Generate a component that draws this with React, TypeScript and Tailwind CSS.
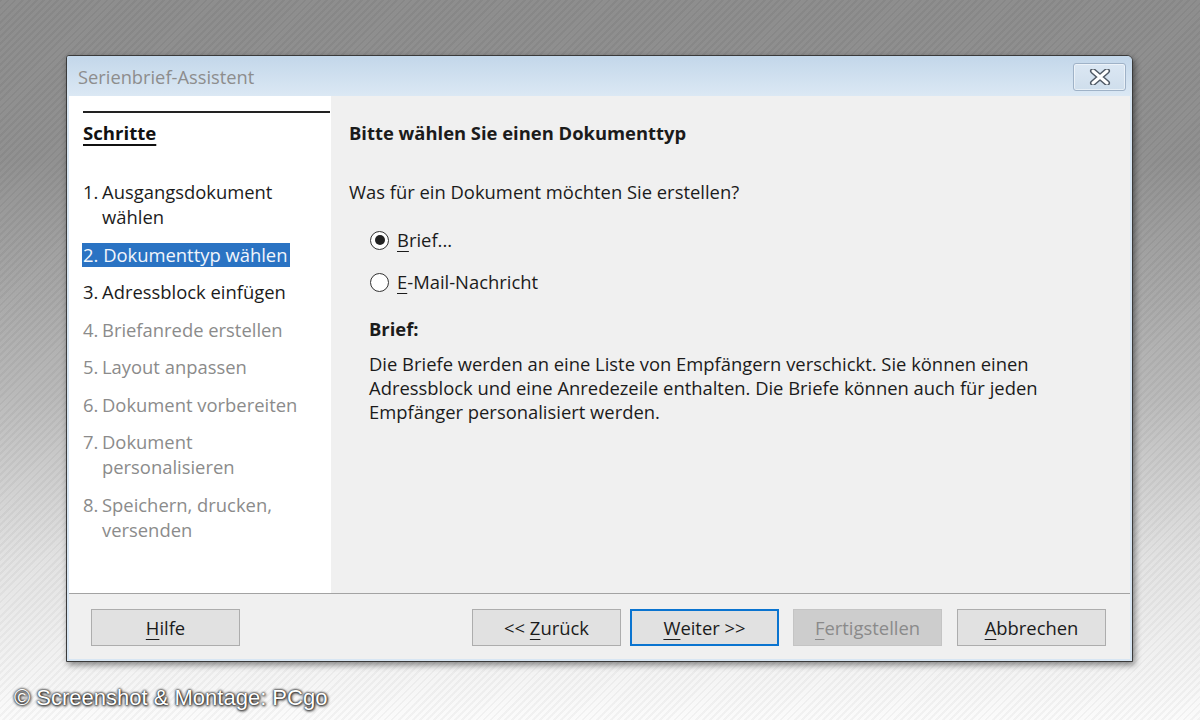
import React from "react";

const font = { fontFamily: '"Open Sans", "Noto Sans", sans-serif' };

function Step({ n, lines, state }: { n: string; lines: string[]; state: "done" | "active" | "todo" | "off" }) {
  const color =
    state === "off" ? "text-[#8b8b8b]" : state === "active" ? "text-[#f2f6fc]" : "text-[#1b1b1b]";
  if (state === "active") {
    return (
      <div className="leading-[25px]">
        <span className="inline-block bg-[#2a73c3] text-[#f2f6fc] h-[24px] leading-[24px] pr-[3px] -ml-[1px] pl-[1px]">
          {n} {lines[0]}
        </span>
      </div>
    );
  }
  return (
    <div className={`flex leading-[25px] ${color}`}>
      <span className="w-[19px] shrink-0">{n}</span>
      <div className="flex flex-col">
        {lines.map((l) => (
          <span key={l}>{l}</span>
        ))}
      </div>
    </div>
  );
}

function Radio({ checked, label, first }: { checked: boolean; label: string; first: string }) {
  return (
    <div className="flex items-center h-[24px] ml-[21px]">
      <div className="w-[19px] h-[19px] rounded-full border-[1.5px] border-[#333] bg-white flex items-center justify-center">
        {checked && <div className="w-[10px] h-[10px] rounded-full bg-[#222]" />}
      </div>
      <span className="ml-[8px] text-[#1b1b1b]">
        <span className="underline underline-offset-[4px] decoration-1">{first}</span>
        {label}
      </span>
    </div>
  );
}

function Btn({
  children,
  variant = "normal",
  className = "",
}: {
  children: React.ReactNode;
  variant?: "normal" | "default" | "disabled";
  className?: string;
}) {
  const cls =
    variant === "default"
      ? "border-2 border-[#0a74d0] bg-[#e1e1e1] text-[#1b1b1b]"
      : variant === "disabled"
      ? "border border-[#c4c4c4] bg-[#cdcdcd] text-[#8a8a8a]"
      : "border border-[#adadad] bg-[#e1e1e1] text-[#1b1b1b]";
  return (
    <div className={`w-[149px] h-[37px] flex items-center justify-center ${cls} ${className}`}>
      <span className="whitespace-pre">{children}</span>
    </div>
  );
}

const U = ({ c }: { c: string }) => (
  <span className="underline underline-offset-[4px] decoration-1">{c}</span>
);

export default function App() {
  return (
    <div
      className="w-[1200px] h-[720px] overflow-hidden bg-[repeating-linear-gradient(135deg,rgba(0,0,0,0.035)_0px,rgba(0,0,0,0.035)_2px,rgba(255,255,255,0.02)_2px,rgba(255,255,255,0.02)_5px),linear-gradient(to_bottom,#8c8c8c_0%,#8f8f8f_22%,#b9b9b9_55%,#e2e2e2_78%,#fbfbfb_100%)]"
      style={font}
    >
      <div className="pt-[55px] pl-[66px]">
        <div className="w-[1067px] h-[607px] border border-[#3a3a3a] rounded-tl-[3px] rounded-tr-[6px] bg-[#d8e6f3] flex flex-col shadow-[2px_3px_6px_rgba(0,0,0,0.45)] overflow-hidden">
          {/* title bar */}
          <div className="h-[40px] shrink-0 flex items-start justify-between pl-[11px] pr-[6px] bg-[linear-gradient(to_bottom,#c3d7ea,#dbe8f4)]">
            <span className="text-[18.3px] leading-[42px] text-[#8d8d8d]">Serienbrief-Assistent</span>
            <div className="mt-[7px] w-[53px] h-[28px] rounded-[3px] border border-[#9fb2c7] bg-[linear-gradient(to_bottom,#dbe7f3,#cfdeec)] flex items-center justify-center shadow-[inset_0_0_0_1px_rgba(255,255,255,0.5)]">
              <svg width="22" height="16" viewBox="0 0 22 16">
                <path d="M4 2 L18 14 M18 2 L4 14" stroke="#505a66" strokeWidth="6" strokeLinecap="round" />
                <path d="M4 2 L18 14 M18 2 L4 14" stroke="#ffffff" strokeWidth="3" strokeLinecap="round" />
              </svg>
            </div>
          </div>
          {/* body */}
          <div className="flex-1 mx-[2px] mb-[2px] flex flex-col">
            <div className="h-[497px] flex">
              {/* left */}
              <div className="w-[262px] bg-white pt-[15px] pl-[14px] text-[18.4px]">
                <div className="h-[2px] bg-[#222] mr-[1px]" />
                <div className="mt-[8px] leading-[24px] text-[18.6px] font-bold text-[#111]">
                  <span className="underline underline-offset-[4px] decoration-[1.5px]">Schritte</span>
                </div>
                <div className="mt-[34px] flex flex-col gap-[12.5px]">
                  <Step n="1." lines={["Ausgangsdokument", "wählen"]} state="done" />
                  <Step n="2." lines={["Dokumenttyp wählen"]} state="active" />
                  <Step n="3." lines={["Adressblock einfügen"]} state="todo" />
                  <Step n="4." lines={["Briefanrede erstellen"]} state="off" />
                  <Step n="5." lines={["Layout anpassen"]} state="off" />
                  <Step n="6." lines={["Dokument vorbereiten"]} state="off" />
                  <Step n="7." lines={["Dokument", "personalisieren"]} state="off" />
                  <Step n="8." lines={["Speichern, drucken,", "versenden"]} state="off" />
                </div>
              </div>
              {/* right */}
              <div className="flex-1 bg-[#f0f0f0] pt-[25px] pl-[18px] text-[18.4px] text-[#1b1b1b]">
                <div className="leading-[24px] font-bold">Bitte wählen Sie einen Dokumenttyp</div>
                <div className="mt-[35px] leading-[24px]">Was für ein Dokument möchten Sie erstellen?</div>
                <div className="mt-[24px] flex flex-col gap-[18px]">
                  <Radio checked first="B" label="rief..." />
                  <Radio checked={false} first="E" label="-Mail-Nachricht" />
                </div>
                <div className="ml-[20px] mt-[23px] leading-[24px] font-bold">Brief:</div>
                <div className="ml-[20px] mt-[11px] leading-[24px] whitespace-nowrap">
                  <div>Die Briefe werden an eine Liste von Empfängern verschickt. Sie können einen</div>
                  <div>Adressblock und eine Anredezeile enthalten. Die Briefe können auch für jeden</div>
                  <div>Empfänger personalisiert werden.</div>
                </div>
              </div>
            </div>
            {/* footer */}
            <div className="flex-1 border-t border-[#a3a3a3] bg-[#f0f0f0] pt-[15px] pl-[22px] pr-[24px] flex text-[18.4px]">
              <Btn>
                <U c="H" />
                ilfe
              </Btn>
              <div className="flex-1" />
              <Btn>
                {"<< "}
                <U c="Z" />
                urück
              </Btn>
              <Btn variant="default" className="ml-[9px]">
                <U c="W" />
                {"eiter >>"}
              </Btn>
              <Btn variant="disabled" className="ml-[14px]">
                <U c="F" />
                ertigstellen
              </Btn>
              <Btn className="ml-[15px]">
                <U c="A" />
                bbrechen
              </Btn>
            </div>
          </div>
        </div>
      </div>
      <div
        className="mt-[23px] pl-[14px] text-[22px] leading-[26px] text-white [text-shadow:0_0_2px_#111,0_0_3px_#333,1px_1px_3px_#222]"
        style={{ fontFamily: '"Liberation Sans", Arial, sans-serif' }}
      >
        © Screenshot &amp; Montage: PCgo
      </div>
    </div>
  );
}
